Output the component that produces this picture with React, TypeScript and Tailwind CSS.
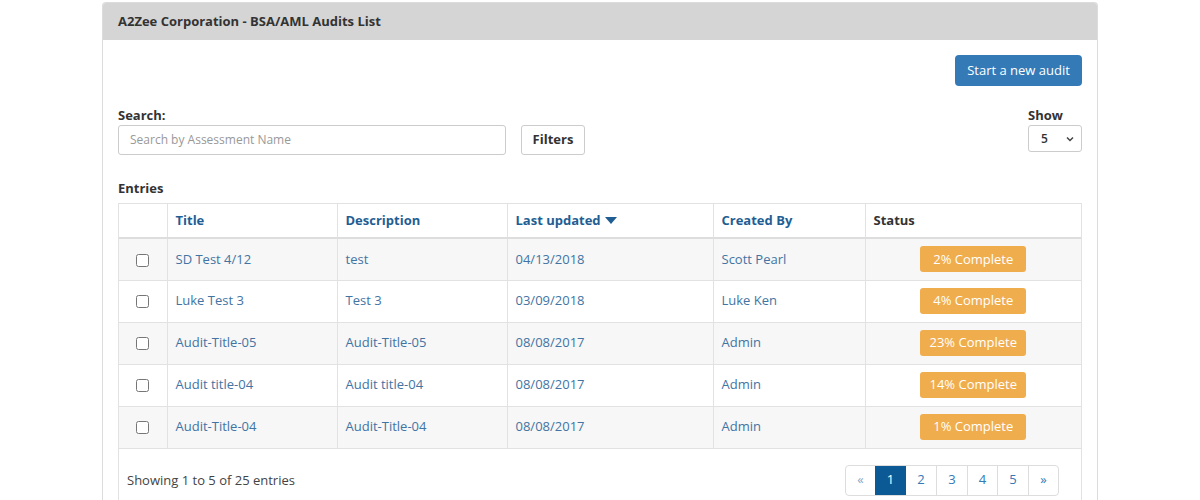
import React from "react";

const rows = [
  { title: "SD Test 4/12", desc: "test", date: "04/13/2018", by: "Scott Pearl", pct: "2% Complete" },
  { title: "Luke Test 3", desc: "Test 3", date: "03/09/2018", by: "Luke Ken", pct: "4% Complete" },
  { title: "Audit-Title-05", desc: "Audit-Title-05", date: "08/08/2017", by: "Admin", pct: "23% Complete" },
  { title: "Audit title-04", desc: "Audit title-04", date: "08/08/2017", by: "Admin", pct: "14% Complete" },
  { title: "Audit-Title-04", desc: "Audit-Title-04", date: "08/08/2017", by: "Admin", pct: "1% Complete" },
];

export default function App() {
  return (
    <div
      className="w-full min-h-[500px] bg-white text-[13px] text-[#333]"
      style={{ fontFamily: '"Open Sans", "Noto Sans", sans-serif' }}
    >
      <div className="mx-auto mt-[2px] w-[996px] rounded-t-[4px] border border-[#dcdcdc] border-b-0">
        <div className="h-[37px] flex items-center px-[15px] bg-[#d5d5d5] rounded-t-[3px] font-bold text-[13px] text-[#333]">
          A2Zee Corporation - BSA/AML Audits List
        </div>
        <div className="px-[15px] pt-[15px]">
          <div className="flex justify-end">
            <button className="h-[31px] w-[127px] rounded-[4px] bg-[#337ab7] text-white text-[13px] leading-none">
              Start a new audit
            </button>
          </div>
          <div className="mt-[20px] flex justify-between items-start">
            <div>
              <div className="font-bold leading-[18px]">Search:</div>
              <div className="flex items-center mt-[1px]">
                <div className="w-[388px] h-[30px] border border-[#ccc] rounded-[3px] flex items-center px-[11px] text-[#999] text-[12px]">
                  Search by Assessment Name
                </div>
                <button className="ml-[15px] h-[30px] w-[64px] border border-[#ccc] rounded-[3px] bg-white font-bold text-[13px] text-[#333]">
                  Filters
                </button>
              </div>
            </div>
            <div>
              <div className="font-bold leading-[18px]">Show</div>
              <div className="mt-[1px] w-[54px] h-[27px] border border-[#ccc] rounded-[3px] flex items-center justify-between pl-[12px] pr-[6px] text-[12px] font-semibold text-[#333]">
                <span>5</span>
                <svg width="10" height="10" viewBox="0 0 10 10" fill="none" stroke="#444" strokeWidth="1.5">
                  <path d="M2 3.5 L5 6.5 L8 3.5" />
                </svg>
              </div>
            </div>
          </div>
          <div className="mt-[24px] font-bold leading-[18px]">Entries</div>
          <div className="mt-[6px] border border-[#e2e2e2] border-b-0">
            <table className="w-full border-collapse">
              <thead>
                <tr className="h-[34px] border-b-2 border-[#ddd] text-left">
                  <th className="w-[48px] border-r border-[#e2e2e2]"></th>
                  <th className="w-[170px] border-r border-[#e2e2e2] px-[8px] font-bold text-[#1f5e93]">Title</th>
                  <th className="w-[170px] border-r border-[#e2e2e2] px-[8px] font-bold text-[#1f5e93]">Description</th>
                  <th className="w-[206px] border-r border-[#e2e2e2] px-[8px] font-bold text-[#1f5e93]">
                    <span className="inline-flex items-center gap-[4px]">
                      Last updated
                      <svg width="12" height="8" viewBox="0 0 12 8">
                        <path d="M0 0 H12 L6 7 Z" fill="#1f5e93" />
                      </svg>
                    </span>
                  </th>
                  <th className="w-[152px] border-r border-[#e2e2e2] px-[8px] font-bold text-[#1f5e93]">Created By</th>
                  <th className="px-[8px] font-bold text-[#333]">Status</th>
                </tr>
              </thead>
              <tbody>
                {rows.map((r, i) => (
                  <tr
                    key={i}
                    className={`h-[42px] border-b border-[#e2e2e2] text-[#4274a3] ${i % 2 === 0 ? "bg-[#f7f7f7]" : "bg-white"}`}
                  >
                    <td className="border-r border-[#e2e2e2] text-center">
                      <input type="checkbox" className="w-[13px] h-[13px] align-middle" />
                    </td>
                    <td className="border-r border-[#e2e2e2] px-[8px]">{r.title}</td>
                    <td className="border-r border-[#e2e2e2] px-[8px]">{r.desc}</td>
                    <td className="border-r border-[#e2e2e2] px-[8px]">{r.date}</td>
                    <td className="border-r border-[#e2e2e2] px-[8px]">{r.by}</td>
                    <td className="px-[8px]">
                      <div className="mx-auto w-[106px] h-[26px] rounded-[3px] bg-[#f0ad4e] text-white flex items-center justify-center text-[13px]">
                        {r.pct}
                      </div>
                    </td>
                  </tr>
                ))}
              </tbody>
            </table>
            <div className="flex items-start justify-between pl-[8px] pr-[22px] pt-[16px] pb-[10px]">
              <div className="mt-[6px] text-[#444]">Showing 1 to 5 of 25 entries</div>
              <div className="flex border border-[#ddd] rounded-[4px] h-[31px]">
                <div className="w-[29px] flex items-center justify-center text-[#8aa6c4]">«</div>
                <div className="w-[31px] flex items-center justify-center bg-[#0b5a96] text-white">1</div>
                <div className="w-[31px] flex items-center justify-center border-r border-[#ddd] text-[#337ab7]">2</div>
                <div className="w-[31px] flex items-center justify-center border-r border-[#ddd] text-[#337ab7]">3</div>
                <div className="w-[30px] flex items-center justify-center border-r border-[#ddd] text-[#337ab7]">4</div>
                <div className="w-[31px] flex items-center justify-center border-r border-[#ddd] text-[#337ab7]">5</div>
                <div className="w-[29px] flex items-center justify-center text-[#337ab7]">»</div>
              </div>
            </div>
          </div>
        </div>
      </div>
    </div>
  );
}
